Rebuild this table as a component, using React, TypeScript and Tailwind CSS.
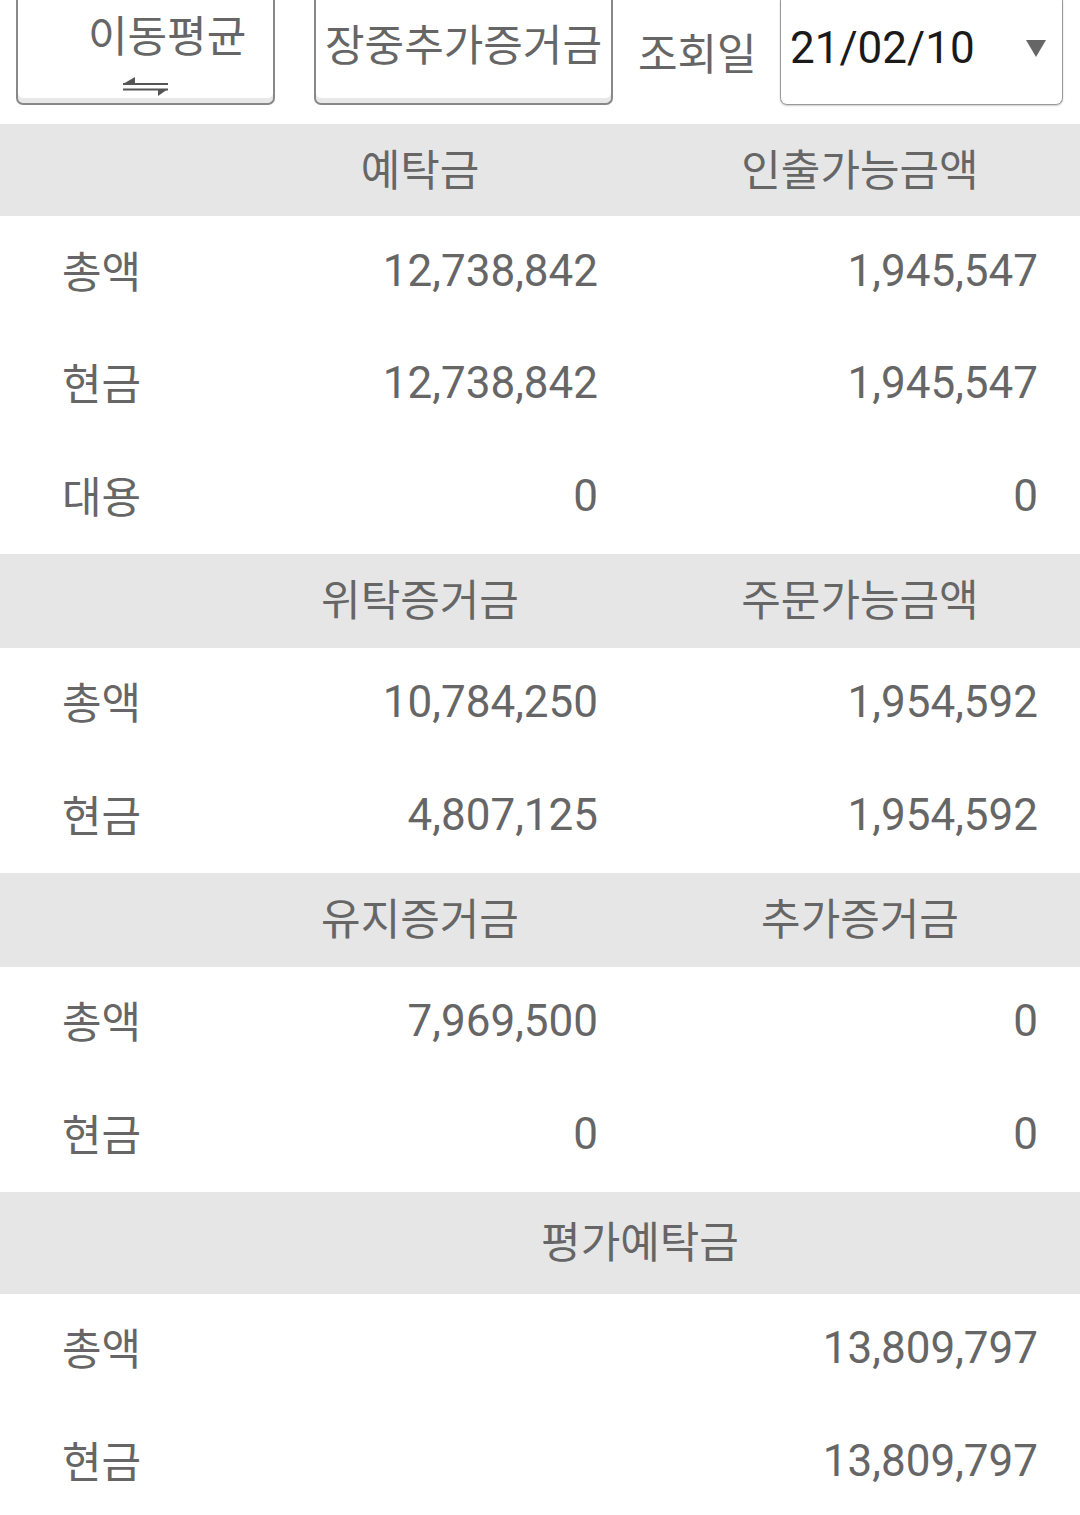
const num = "font-['Roboto',sans-serif] text-[44px] leading-none text-[#666]";
const kor = "font-['Noto_Sans_CJK_KR',sans-serif] text-[43px] leading-none text-[#666]";

type Row = { label: string; a?: string; b: string };
type Section = { heads: string[]; headH: string; rows: Row[] };

const sections: Section[] = [
  {
    heads: ["예탁금", "인출가능금액"],
    headH: "h-[92px]",
    rows: [
      { label: "총액", a: "12,738,842", b: "1,945,547" },
      { label: "현금", a: "12,738,842", b: "1,945,547" },
      { label: "대용", a: "0", b: "0" },
    ],
  },
  {
    heads: ["위탁증거금", "주문가능금액"],
    headH: "h-[94px]",
    rows: [
      { label: "총액", a: "10,784,250", b: "1,954,592" },
      { label: "현금", a: "4,807,125", b: "1,954,592" },
    ],
  },
  {
    heads: ["유지증거금", "추가증거금"],
    headH: "h-[94px]",
    rows: [
      { label: "총액", a: "7,969,500", b: "0" },
      { label: "현금", a: "0", b: "0" },
    ],
  },
  {
    heads: ["평가예탁금"],
    headH: "h-[102px]",
    rows: [
      { label: "총액", b: "13,809,797" },
      { label: "현금", b: "13,809,797" },
    ],
  },
];

function SwapArrow() {
  return (
    <svg width="46" height="20" viewBox="0 0 46 20" className="block">
      <line x1="0" y1="7" x2="45" y2="7" stroke="#555" strokeWidth="2" />
      <polygon points="0,7 12,0 12,7" fill="#555" />
      <line x1="0" y1="12.5" x2="45" y2="12.5" stroke="#555" strokeWidth="2" />
      <polygon points="45,12 35,12 35,19" fill="#555" />
    </svg>
  );
}

export default function App() {
  return (
    <div className="w-[1080px] h-[1515px] overflow-hidden bg-white">
      {/* top toolbar */}
      <div className="h-[124px] flex items-start pl-[16px]">
        <div className="w-[259px] h-[105px] border-x-2 border-b-2 border-[#888] rounded-b-[7px] shadow-[inset_0_-5px_0_#e8e8e8] pt-[12px]">
          <p className={`${kor} pl-[70px]`}>이동평균</p>
          <div className="ml-[105px] mt-[22px]">
            <SwapArrow />
          </div>
        </div>
        <div className="ml-[39px] w-[299px] h-[105px] border-x-2 border-b-2 border-[#888] rounded-b-[7px] shadow-[inset_0_-5px_0_#e8e8e8] flex justify-center pt-[21px]">
          <p className={`${kor} whitespace-nowrap`}>장중추가증거금</p>
        </div>
        <p className={`${kor} ml-[25px] mt-[30px] w-[117px] whitespace-nowrap`}>조회일</p>
        <div className="ml-[25px] w-[283px] h-[105px] border-x border-b border-[#999] rounded-b-[7px] shadow-[0_1px_2px_rgba(0,0,0,0.2)] flex items-center pl-[9px] pr-[16px] pb-[8px]">
          <span className="font-['Roboto',sans-serif] text-[44px] leading-none text-[#1a1a1a]">21/02/10</span>
          <span className="ml-auto w-0 h-0 border-l-[10px] border-r-[10px] border-t-[17px] border-l-transparent border-r-transparent border-t-[#666]" />
        </div>
      </div>

      {sections.map((s, i) => (
        <div key={i}>
          <div className={`${s.headH} bg-[#e6e6e6] grid grid-cols-[200px_440px_440px] items-center`}>
            {s.heads.length === 2 ? (
              <>
                <div />
                <p className={`${kor} text-center pb-[6px]`}>{s.heads[0]}</p>
                <p className={`${kor} text-center pb-[6px]`}>{s.heads[1]}</p>
              </>
            ) : (
              <>
                <div />
                <p className={`${kor} text-center col-span-2 pb-[6px]`}>{s.heads[0]}</p>
              </>
            )}
          </div>
          {s.rows.map((r, j) => (
            <div key={j} className="h-[112.5px] grid grid-cols-[200px_440px_440px] items-center">
              <p className={`${kor} pl-[62px] pb-[6px]`}>{r.label}</p>
              <p className={`${num} text-right pr-[42px] pb-[3px]`}>{r.a ?? ""}</p>
              <p className={`${num} text-right pr-[42px] pb-[3px]`}>{r.b}</p>
            </div>
          ))}
        </div>
      ))}
    </div>
  );
}
